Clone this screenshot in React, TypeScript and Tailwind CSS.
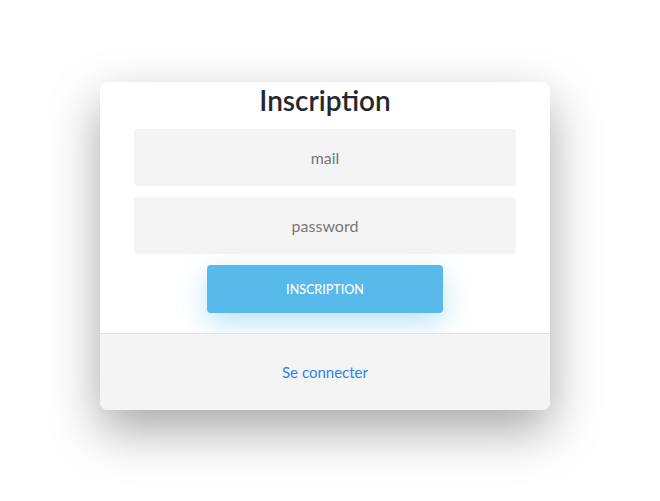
export default function App() {
  return (
    <div className="min-h-[501px] w-full bg-white flex justify-center pr-[10px] pt-[82px] font-['Lato',sans-serif]">
      <div className="w-[450px] h-[328px] rounded-lg bg-white shadow-[0_20px_50px_rgba(0,0,0,0.35)] flex flex-col overflow-hidden">
        {/* Form */}
        <div className="flex flex-col items-center pb-[20px]">
          <h1 className="text-[28px] leading-[36px] font-semibold text-[#25282c]">Inscription</h1>
          <input
            placeholder="mail"
            className="mt-[11px] w-[382px] h-[57px] rounded bg-[#f4f4f4] text-center text-[16px] placeholder:text-[#777] outline-none"
          />
          <input
            type="password"
            placeholder="password"
            className="mt-[11px] w-[382px] h-[57px] rounded bg-[#f4f4f4] text-center text-[16px] placeholder:text-[#777] outline-none"
          />
          <button className="mt-[11px] w-[236px] h-[48px] pt-[3px] rounded bg-[#58b9eb] text-white text-[12.5px] font-medium uppercase shadow-[0_10px_28px_rgba(88,185,235,0.4)]">
            Inscription
          </button>
        </div>

        {/* Footer */}
        <div className="flex-1 border-t border-[#d4e6f4] bg-[#f4f4f4] flex items-center justify-center">
          <a href="#" className="text-[15px] text-[#2f80ed]">Se connecter</a>
        </div>
      </div>
    </div>
  )
}
